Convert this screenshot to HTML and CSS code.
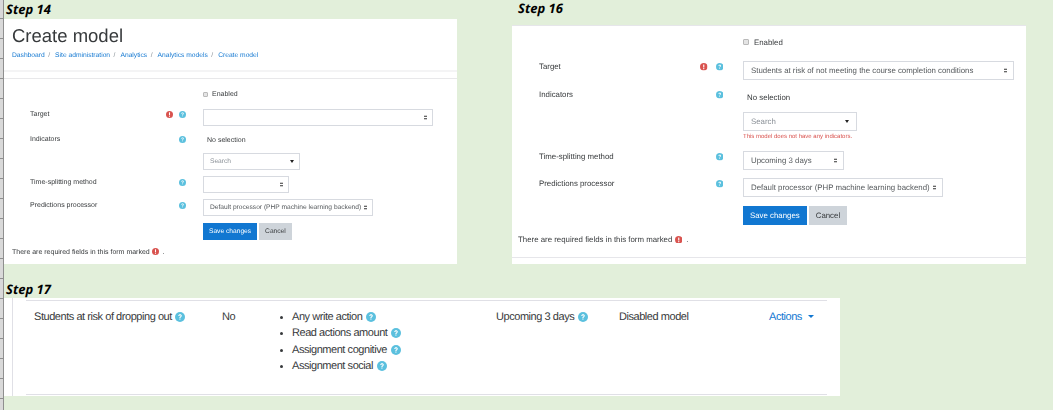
FILE: index.html
```html
<!DOCTYPE html>
<html lang="en">
<head>
<meta charset="utf-8">
<title>Create model steps</title>
<link rel="stylesheet" href="styles.css">
</head>
<body>
<svg class="defs" width="0" height="0" aria-hidden="true">
  <symbol id="help" viewBox="0 0 16 16">
    <circle cx="8" cy="8" r="8" fill="#5bc0de"/>
    <path d="M5.2 6.2C5.3 4.6 6.5 3.6 8.1 3.6c1.600 0 2.800 1 2.800 2.400 0 1.100-.6 1.700-1.400 2.200-.7.5-.9.8-.9 1.500H7c0-1.200.3-1.800 1.200-2.400.6-.4.900-.7.900-1.200 0-.5-.4-.9-1-.9-.7 0-1.100.4-1.200 1z" fill="#fff"/>
    <rect x="7" y="10.400" width="1.700" height="1.800" fill="#fff"/>
  </symbol>
  <symbol id="req" viewBox="0 0 16 16">
    <circle cx="8" cy="8" r="8" fill="#d9534f"/>
    <rect x="6.800" y="3" width="2.400" height="6.500" rx=".6" fill="#fff"/>
    <rect x="6.800" y="10.700" width="2.400" height="2.400" rx=".6" fill="#fff"/>
  </symbol>
</svg>

<div class="ruler"></div>

<div class="top">
  <section class="step step14">
    <h2 class="step-title">Step 14</h2>
    <div class="panel panel14">
      <h1>Create model</h1>
      <nav class="crumbs">
        <a>Dashboard</a><i>/</i><a>Site administration</a><i>/</i><a>Analytics</a><i>/</i><a>Analytics models</a><i>/</i><a>Create model</a>
      </nav>
      <div class="double-rule"></div>
      <form class="form small">
        <div class="row check-row"><span class="label"></span><span class="marks"></span><span class="field"><span class="checkbox"></span>Enabled</span></div>
        <div class="row r-target"><span class="label">Target</span><span class="marks"><svg class="ic"><use href="#req"/></svg><svg class="ic"><use href="#help"/></svg></span><span class="field"><span class="select w-target"><b></b></span></span></div>
        <div class="row r-ind"><span class="label">Indicators</span><span class="marks"><svg class="ic"><use href="#help"/></svg></span><span class="field none">No selection</span></div>
        <div class="row r-search"><span class="label"></span><span class="marks"></span><span class="field"><span class="search w-search">Search<u></u></span></span></div>
        <div class="row r-time"><span class="label">Time-splitting method</span><span class="marks"><svg class="ic"><use href="#help"/></svg></span><span class="field"><span class="select w-time"><b></b></span></span></div>
        <div class="row r-proc"><span class="label">Predictions processor</span><span class="marks"><svg class="ic"><use href="#help"/></svg></span><span class="field"><span class="select">Default processor (PHP machine learning backend)<b></b></span></span></div>
        <div class="row r-btn"><span class="label"></span><span class="marks"></span><span class="field btns"><span class="btn primary">Save changes</span><span class="btn">Cancel</span></span></div>
        <p class="req-note">There are required fields in this form marked <svg class="ic"><use href="#req"/></svg> &nbsp;.</p>
      </form>
    </div>
  </section>

  <section class="step step16">
    <h2 class="step-title">Step 16</h2>
    <div class="panel panel16">
      <form class="form large">
        <div class="row check-row"><span class="label"></span><span class="marks"></span><span class="field"><span class="checkbox"></span>Enabled</span></div>
        <div class="row r-target"><span class="label">Target</span><span class="marks"><svg class="ic"><use href="#req"/></svg><svg class="ic"><use href="#help"/></svg></span><span class="field"><span class="select w-target">Students at risk of not meeting the course completion conditions<b></b></span></span></div>
        <div class="row r-ind"><span class="label">Indicators</span><span class="marks"><svg class="ic"><use href="#help"/></svg></span><span class="field none">No selection</span></div>
        <div class="row r-search"><span class="label"></span><span class="marks"></span><span class="field column"><span class="search w-search">Search<u></u></span><span class="error">This model does not have any indicators.</span></span></div>
        <div class="row r-time"><span class="label">Time-splitting method</span><span class="marks"><svg class="ic"><use href="#help"/></svg></span><span class="field"><span class="select w-time">Upcoming 3 days<b></b></span></span></div>
        <div class="row r-proc"><span class="label">Predictions processor</span><span class="marks"><svg class="ic"><use href="#help"/></svg></span><span class="field"><span class="select">Default processor (PHP machine learning backend)<b></b></span></span></div>
        <div class="row r-btn"><span class="label"></span><span class="marks"></span><span class="field btns"><span class="btn primary">Save changes</span><span class="btn">Cancel</span></span></div>
        <p class="req-note">There are required fields in this form marked <svg class="ic"><use href="#req"/></svg> &nbsp;.</p>
      </form>
    </div>
  </section>
</div>

<section class="step step17">
  <h2 class="step-title">Step 17</h2>
  <div class="panel panel17">
    <div class="model-row">
      <div class="c-name">Students at risk of dropping out <svg class="ic"><use href="#help"/></svg></div>
      <div class="c-no">No</div>
      <ul class="c-list">
        <li>Any write action <svg class="ic"><use href="#help"/></svg></li>
        <li>Read actions amount <svg class="ic"><use href="#help"/></svg></li>
        <li>Assignment cognitive <svg class="ic"><use href="#help"/></svg></li>
        <li>Assignment social <svg class="ic"><use href="#help"/></svg></li>
      </ul>
      <div class="c-up">Upcoming 3 days <svg class="ic"><use href="#help"/></svg></div>
      <div class="c-dis">Disabled model</div>
      <div class="c-act">Actions<span class="caret"></span></div>
    </div>
  </div>
</section>
</body>
</html>
```

FILE: styles.css
```css
* { box-sizing: border-box; }
html, body { margin: 0; }
body {
  width: 1053px;
  height: 410px;
  overflow: hidden;
  background: #e2efda;
  font-family: "Liberation Sans", Arial, sans-serif;
  color: #373a3c;
  padding-left: 4px;
  position: relative;
  text-rendering: geometricPrecision;
}
.defs { position: absolute; }
.ruler {
  position: absolute;
  left: 0;
  top: 0;
  width: 4px;
  height: 410px;
  border-right: 1px solid #8f8f8f;
  background: repeating-linear-gradient(to bottom, #d9d9d9 0 18px, #8f8f8f 18px 19px, #d9d9d9 19px 20px);
}
.top { display: flex; height: 279px; }
.step14 { width: 508px; }
.step-title {
  margin: 0;
  height: 19px;
  padding: 1px 0 0 2px;
  font-family: "Open Sans", sans-serif;
  font-style: italic;
  font-weight: 700;
  font-size: 13px;
  line-height: 16px;
  color: #000;
}
.step16 .step-title { padding-left: 6px; height: 25px; line-height: 17px; padding-top: 0; }
.panel { background: #fff; }
.panel14 { width: 453px; height: 245px; }
.panel16 {
  width: 514px;
  height: 239px;
  border-top: 1px solid #e6e6ea;
  position: relative;
}
.panel16::after {
  content: "";
  position: absolute;
  left: 0; right: 0; bottom: 6px;
  border-top: 1px solid #e6e6ea;
}
h1 {
  margin: 0;
  padding: 5px 0 0 8px;
  font-weight: 400;
  font-size: 18.500px;
  line-height: 23px;
  color: #373a3c;
  filter: blur(.3px);
}
.crumbs {
  display: flex;
  padding: 4px 0 0 8px;
  font-size: 6.700px;
  line-height: 10px;
  color: #1177d1;
  filter: blur(.25px);
}
.crumbs i { font-style: normal; color: #818a91; margin: 0 5px 0 3.500px; }
.double-rule {
  height: 9px;
  margin-top: 9px;
  border-top: 2px solid #f4f4f5;
  border-bottom: 1px solid #e8e8ea;
}
.form { filter: blur(.25px); }
.row { display: flex; }
.label { flex: none; }
.marks { flex: none; display: flex; justify-content: flex-end; align-items: flex-start; }
.field { display: flex; align-items: center; }
.column { flex-direction: column; align-items: flex-start; }
.ic { display: inline-block; vertical-align: -1px; }

.small { font-size: 7px; line-height: 10px; }
.small .label { width: 139px; padding: 2px 0 0 26px; }
.small .marks { width: 43px; gap: 6px; }
.small .marks .ic { margin-top: 3px; }
.small .ic { width: 7px; height: 7px; }
.small .field { margin-left: 17px; }
.small .check-row { height: 11px; margin-top: 10px; }
.small .checkbox { width: 5px; height: 5px; margin-right: 4px; }
.small .r-target { margin-top: 9px; height: 17px; align-items: flex-start; }
.small .r-target .label { padding-top: 1px; }
.small .r-target .marks .ic { margin-top: 2px; }
.small .select, .small .search, .small .btn { font-size: 6.650px; }
.small .select, .small .search { height: 17px; padding: 0 5px 0 6px; }
.small .w-target { width: 230px; }
.small .r-ind { margin-top: 7px; height: 17px; }
.small .none { padding-left: 4px; align-self: flex-start; padding-top: 3px; }
.small .r-search { margin-top: 3px; height: 17px; }
.small .w-search { width: 97px; }
.small .w-search u { margin-right: 0; }
.small .r-time { margin-top: 6px; height: 17px; }
.small .w-time { width: 86px; }
.small .r-proc { margin-top: 6px; height: 17px; }
.small .r-btn { margin-top: 7px; height: 17px; }
.small .btn { height: 17px; padding: 0 6px; }
.small .btns { gap: 2px; }
.small .req-note { margin: 8px 0 0 8px; }

.large { font-size: 7.850px; line-height: 11px; padding-top: 10px; }
.large .label { width: 129px; padding-left: 27px; }
.large .marks { width: 82px; gap: 8px; }
.large .ic { width: 7.500px; height: 7.500px; }
.large .marks .ic { margin-top: 2px; }
.large .field { margin-left: 20px; }
.large .check-row { height: 12px; }
.large .checkbox { width: 6px; height: 6px; margin-right: 5px; }
.large .r-target { margin-top: 13px; height: 19px; }
.large .select, .large .search { height: 19px; padding: 0 6px 0 7px; }
.large .w-target { width: 271px; }
.large .r-ind { margin-top: 9px; height: 19px; }
.large .none { padding-left: 4px; align-self: flex-start; padding-top: 3px; }
.large .r-search { margin-top: 4px; height: 33px; }
.large .w-search { width: 114px; }
.large .w-search u { margin-right: 1px; }
.large .error { font-size: 6px; line-height: 8px; color: #d9534f; margin-top: 2px; }
.large .r-time { margin-top: 6px; height: 19px; }
.large .w-time { width: 101px; }
.large .r-proc { margin-top: 8px; height: 19px; }
.large .r-btn { margin-top: 9px; height: 19px; }
.large .btn { height: 19px; padding: 0 7px; }
.large .btns { gap: 2px; }
.large .req-note { margin: 9px 0 0 6px; }

.checkbox { display: inline-block; border: 1px solid #b9b9b9; background: #e4e4e4; border-radius: 1px; }
.select, .search {
  display: flex;
  align-items: center;
  justify-content: space-between;
  gap: 3px;
  border: 1px solid #d7dae0;
  background: #fff;
  color: #55595c;
}
.search { color: #8a9097; }
.select b {
  flex: none;
  margin-left: auto;
  width: 3px;
  height: 5px;
  background:
    linear-gradient(to bottom, transparent 0, #333 100%) top / 100% 40% no-repeat,
    linear-gradient(to top, transparent 0, #333 100%) bottom / 100% 40% no-repeat;
}
.search u {
  width: 0; height: 0;
  border-left: 2px solid transparent;
  border-right: 2px solid transparent;
  border-top: 3px solid #222;
}
.btn { display: flex; align-items: center; background: #ced4da; color: #373a3c; }
.btn.primary { background: #1177d1; color: #fff; border: 0; }
.req-note { margin: 0; }

.step17 { width: 836px; }
.step17 .step-title { height: 19px; padding-top: 2px; }
.panel17 {
  height: 98px;
  padding: 2px 13px 2px 22px;
  position: relative;
  font-size: 11px;
  letter-spacing: -.45px;
  line-height: 16px;
  color: #373a3c;
}
.panel17::before {
  content: "";
  position: absolute;
  left: 8px; top: 0; bottom: 0;
  border-left: 1px solid #e0e0e6;
}
.model-row {
  height: 95px;
  border-top: 1px solid #e0e0e6;
  border-bottom: 1px solid #e0e0e6;
  display: flex;
  padding-top: 8px;
}
.panel17 .ic { width: 10px; height: 10px; margin-left: 1px; vertical-align: -2px; }
.c-name { width: 196px; padding-left: 8px; }
.c-no { width: 53px; }
.c-list { width: 221px; margin: 0; padding: 0 0 0 17px; list-style: none; }
.c-list li { position: relative; height: 16.400px; }
.c-list li::before {
  content: "";
  position: absolute;
  left: -12px; top: 7px;
  width: 3px; height: 3px;
  border-radius: 50%;
  background: #373a3c;
}
.c-up { width: 123px; }
.c-dis { width: 150px; }
.c-act { color: #1177d1; display: flex; align-items: flex-start; }
.caret {
  margin: 6px 0 0 6px;
  border-left: 3px solid transparent;
  border-right: 3px solid transparent;
  border-top: 3px solid #1177d1;
}
```
